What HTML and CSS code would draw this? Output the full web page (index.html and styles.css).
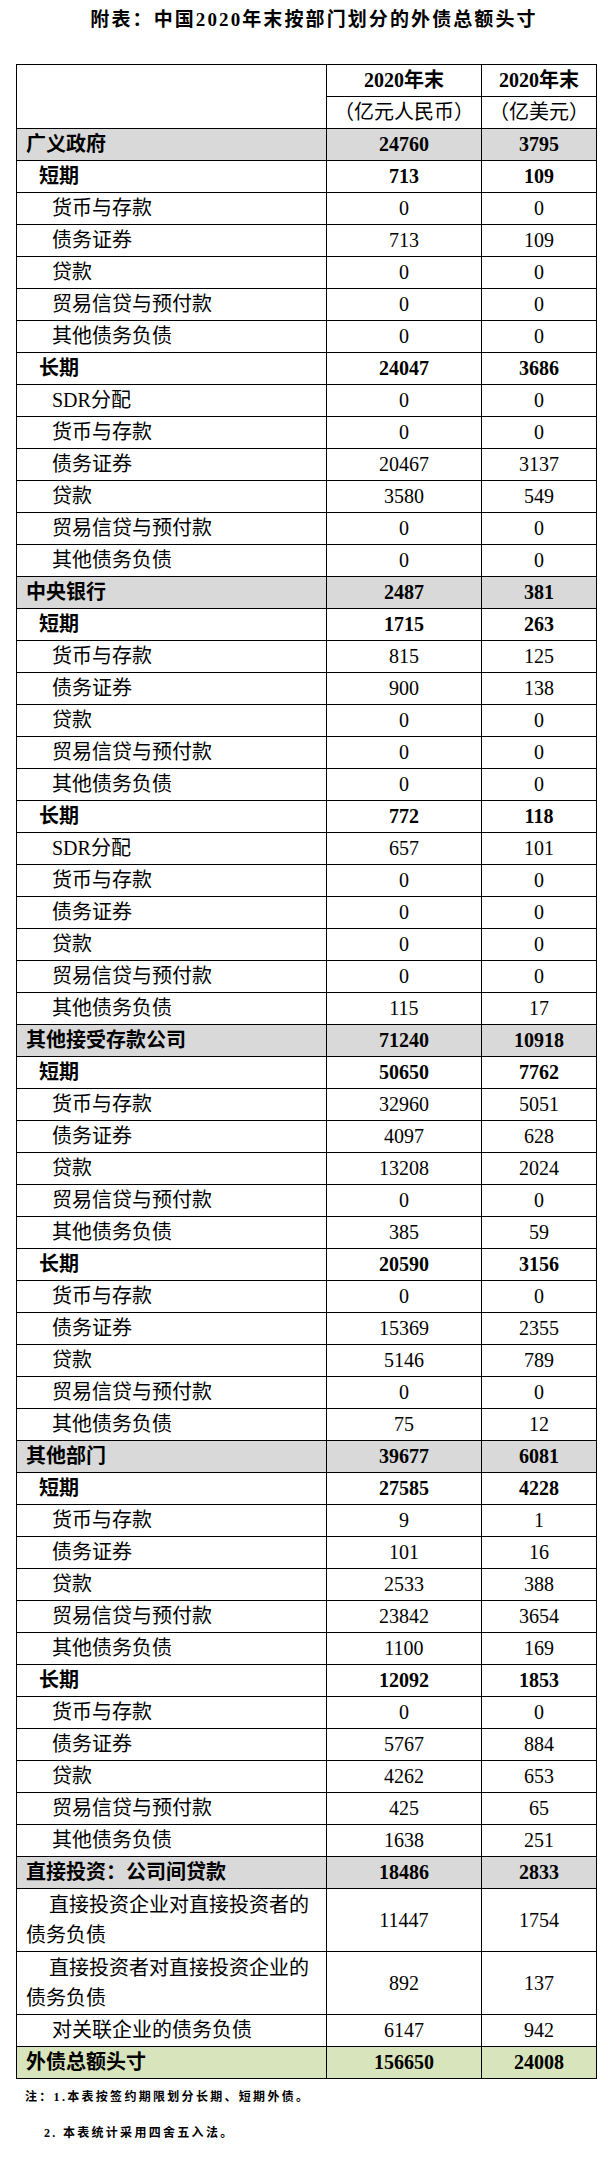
FILE: index.html
```html
<!DOCTYPE html>
<html lang="zh-CN">
<head>
<meta charset="utf-8">
<title>附表：中国2020年末按部门划分的外债总额头寸</title>
<link rel="stylesheet" href="styles.css">
</head>
<body>
<div class="page">
  <h1 class="title">附表：中国2020年末按部门划分的外债总额头寸</h1>
  <table class="debt">
    <colgroup>
      <col class="c-label">
      <col class="c-rmb">
      <col class="c-usd">
    </colgroup>
    <thead>
      <tr>
        <th class="blank" rowspan="2"></th>
        <th class="yr">2020年末</th>
        <th class="yr">2020年末</th>
      </tr>
      <tr>
        <th class="unit">（亿元人民币）</th>
        <th class="unit">（亿美元）</th>
      </tr>
    </thead>
    <tbody>
      <tr class="grp"><td class="lab">广义政府</td><td>24760</td><td>3795</td></tr>
      <tr class="l1"><td class="lab">短期</td><td>713</td><td>109</td></tr>
      <tr class="l2"><td class="lab">货币与存款</td><td>0</td><td>0</td></tr>
      <tr class="l2"><td class="lab">债务证券</td><td>713</td><td>109</td></tr>
      <tr class="l2"><td class="lab">贷款</td><td>0</td><td>0</td></tr>
      <tr class="l2"><td class="lab">贸易信贷与预付款</td><td>0</td><td>0</td></tr>
      <tr class="l2"><td class="lab">其他债务负债</td><td>0</td><td>0</td></tr>
      <tr class="l1"><td class="lab">长期</td><td>24047</td><td>3686</td></tr>
      <tr class="l2"><td class="lab">SDR分配</td><td>0</td><td>0</td></tr>
      <tr class="l2"><td class="lab">货币与存款</td><td>0</td><td>0</td></tr>
      <tr class="l2"><td class="lab">债务证券</td><td>20467</td><td>3137</td></tr>
      <tr class="l2"><td class="lab">贷款</td><td>3580</td><td>549</td></tr>
      <tr class="l2"><td class="lab">贸易信贷与预付款</td><td>0</td><td>0</td></tr>
      <tr class="l2"><td class="lab">其他债务负债</td><td>0</td><td>0</td></tr>

      <tr class="grp"><td class="lab">中央银行</td><td>2487</td><td>381</td></tr>
      <tr class="l1"><td class="lab">短期</td><td>1715</td><td>263</td></tr>
      <tr class="l2"><td class="lab">货币与存款</td><td>815</td><td>125</td></tr>
      <tr class="l2"><td class="lab">债务证券</td><td>900</td><td>138</td></tr>
      <tr class="l2"><td class="lab">贷款</td><td>0</td><td>0</td></tr>
      <tr class="l2"><td class="lab">贸易信贷与预付款</td><td>0</td><td>0</td></tr>
      <tr class="l2"><td class="lab">其他债务负债</td><td>0</td><td>0</td></tr>
      <tr class="l1"><td class="lab">长期</td><td>772</td><td>118</td></tr>
      <tr class="l2"><td class="lab">SDR分配</td><td>657</td><td>101</td></tr>
      <tr class="l2"><td class="lab">货币与存款</td><td>0</td><td>0</td></tr>
      <tr class="l2"><td class="lab">债务证券</td><td>0</td><td>0</td></tr>
      <tr class="l2"><td class="lab">贷款</td><td>0</td><td>0</td></tr>
      <tr class="l2"><td class="lab">贸易信贷与预付款</td><td>0</td><td>0</td></tr>
      <tr class="l2"><td class="lab">其他债务负债</td><td>115</td><td>17</td></tr>

      <tr class="grp"><td class="lab">其他接受存款公司</td><td>71240</td><td>10918</td></tr>
      <tr class="l1"><td class="lab">短期</td><td>50650</td><td>7762</td></tr>
      <tr class="l2"><td class="lab">货币与存款</td><td>32960</td><td>5051</td></tr>
      <tr class="l2"><td class="lab">债务证券</td><td>4097</td><td>628</td></tr>
      <tr class="l2"><td class="lab">贷款</td><td>13208</td><td>2024</td></tr>
      <tr class="l2"><td class="lab">贸易信贷与预付款</td><td>0</td><td>0</td></tr>
      <tr class="l2"><td class="lab">其他债务负债</td><td>385</td><td>59</td></tr>
      <tr class="l1"><td class="lab">长期</td><td>20590</td><td>3156</td></tr>
      <tr class="l2"><td class="lab">货币与存款</td><td>0</td><td>0</td></tr>
      <tr class="l2"><td class="lab">债务证券</td><td>15369</td><td>2355</td></tr>
      <tr class="l2"><td class="lab">贷款</td><td>5146</td><td>789</td></tr>
      <tr class="l2"><td class="lab">贸易信贷与预付款</td><td>0</td><td>0</td></tr>
      <tr class="l2"><td class="lab">其他债务负债</td><td>75</td><td>12</td></tr>

      <tr class="grp"><td class="lab">其他部门</td><td>39677</td><td>6081</td></tr>
      <tr class="l1"><td class="lab">短期</td><td>27585</td><td>4228</td></tr>
      <tr class="l2"><td class="lab">货币与存款</td><td>9</td><td>1</td></tr>
      <tr class="l2"><td class="lab">债务证券</td><td>101</td><td>16</td></tr>
      <tr class="l2"><td class="lab">贷款</td><td>2533</td><td>388</td></tr>
      <tr class="l2"><td class="lab">贸易信贷与预付款</td><td>23842</td><td>3654</td></tr>
      <tr class="l2"><td class="lab">其他债务负债</td><td>1100</td><td>169</td></tr>
      <tr class="l1"><td class="lab">长期</td><td>12092</td><td>1853</td></tr>
      <tr class="l2"><td class="lab">货币与存款</td><td>0</td><td>0</td></tr>
      <tr class="l2"><td class="lab">债务证券</td><td>5767</td><td>884</td></tr>
      <tr class="l2"><td class="lab">贷款</td><td>4262</td><td>653</td></tr>
      <tr class="l2"><td class="lab">贸易信贷与预付款</td><td>425</td><td>65</td></tr>
      <tr class="l2"><td class="lab">其他债务负债</td><td>1638</td><td>251</td></tr>

      <tr class="grp"><td class="lab">直接投资：公司间贷款</td><td>18486</td><td>2833</td></tr>
      <tr class="wrap"><td class="lab">直接投资企业对直接投资者的债务负债</td><td>11447</td><td>1754</td></tr>
      <tr class="wrap"><td class="lab">直接投资者对直接投资企业的债务负债</td><td>892</td><td>137</td></tr>
      <tr class="l2"><td class="lab">对关联企业的债务负债</td><td>6147</td><td>942</td></tr>
      <tr class="grand"><td class="lab">外债总额头寸</td><td>156650</td><td>24008</td></tr>
    </tbody>
  </table>
  <div class="notes">
    <p class="note">注：1.本表按签约期限划分长期、短期外债。</p>
    <p class="note note-2">2. 本表统计采用四舍五入法。</p>
  </div>
</div>
</body>
</html>
```

FILE: styles.css
```css
html, body {
  margin: 0;
  padding: 0;
  background: #ffffff;
  color: #000000;
}

.page {
  width: 608px;
  font-family: "Liberation Serif", "Noto Sans CJK SC", serif;
}

.title {
  margin: 0;
  padding: 0 0 0 20px;
  height: 40px;
  line-height: 40px;
  font-size: 19px;
  font-weight: 700;
  letter-spacing: 2.1px;
  text-align: center;
  margin-bottom: 24px;
}

.debt {
  margin-left: 16px;
  width: 580px;
  table-layout: fixed;
  border-collapse: collapse;
  font-size: 20px;
}

.c-label { width: 310px; }
.c-rmb { width: 155px; }
.c-usd { width: 115px; }

.debt th,
.debt td {
  border: 1px solid #000;
  padding: 0;
  line-height: 31px;
  text-align: center;
  vertical-align: middle;
  white-space: nowrap;
  font-weight: 400;
}

.debt th.yr {
  font-weight: 700;
}

.debt th.unit {
  font-weight: 400;
}

.debt td.lab {
  text-align: left;
  padding-left: 9px;
}

.grp td {
  background: #d9d9d9;
  font-weight: 700;
}

.grand td {
  background: #d8e4bc;
  font-weight: 700;
}

.l1 td {
  font-weight: 700;
}

.l1 td.lab {
  padding-left: 22px;
}

.l2 td.lab {
  padding-left: 35px;
}

.wrap td {
  line-height: 30px;
  padding-top: 1px;
  padding-bottom: 1px;
}

.wrap td.lab {
  white-space: normal;
  text-indent: 23px;
  padding-right: 0;
}

.notes {
  margin-left: 25px;
  font-size: 12px;
  font-weight: 700;
  letter-spacing: 2.3px;
}

.note {
  margin: 0;
  line-height: 36px;
}

.note-2 {
  padding-left: 19px;
}
```
